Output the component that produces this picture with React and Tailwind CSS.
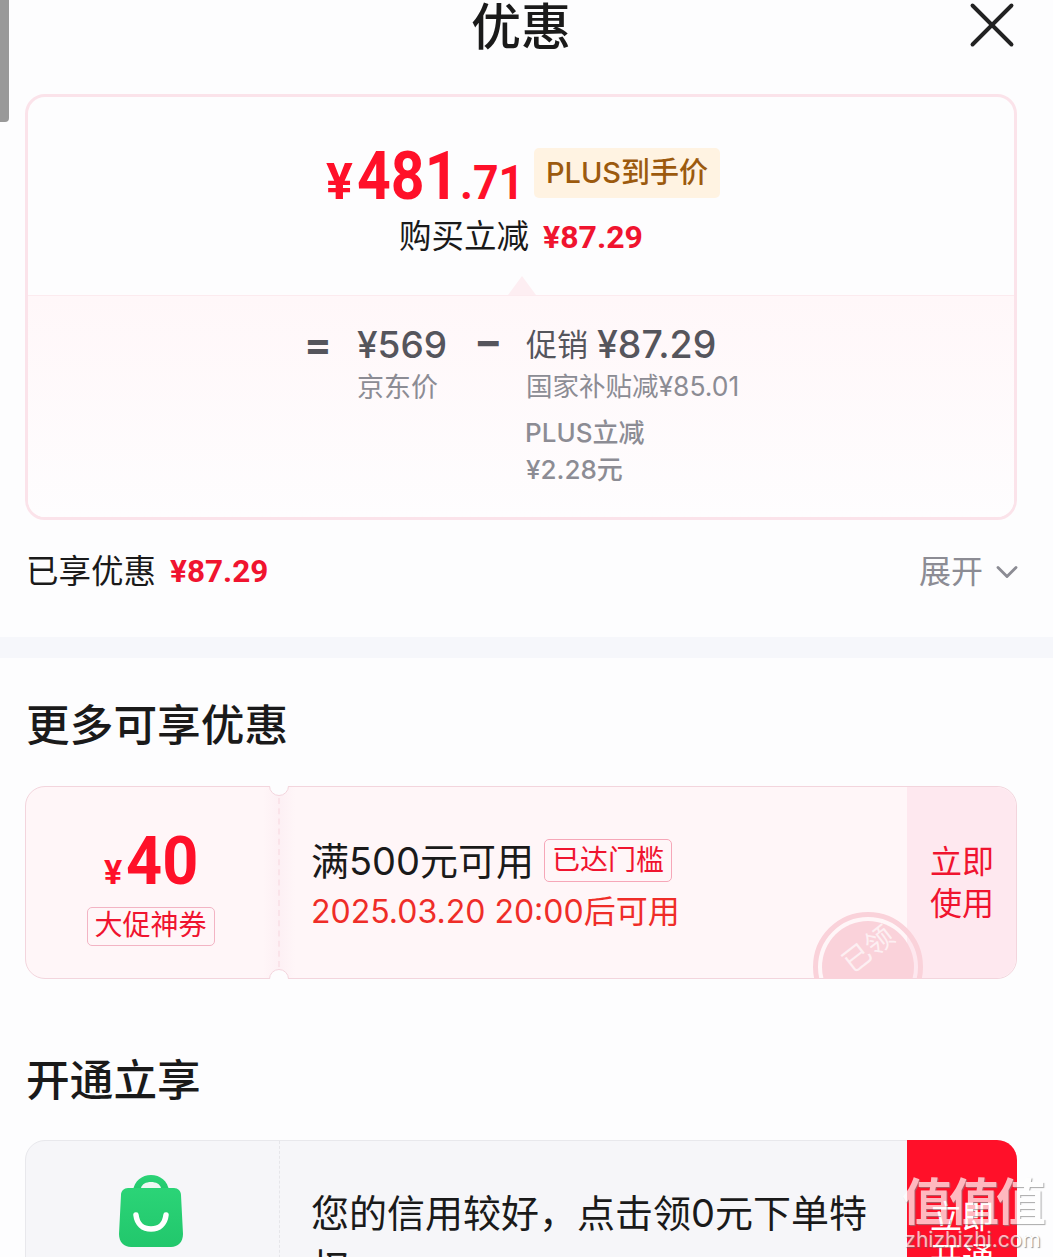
import { X, ChevronDown } from "lucide-react";

const sans = "font-['Inter','Noto_Sans_CJK_SC',sans-serif]";
const num = "font-['Roboto',sans-serif]";

const BagLogo = () => (
  <svg width="64" height="72" viewBox="0 0 64 72">
    <defs>
      <linearGradient id="bag" x1="0" y1="0" x2="0" y2="1">
        <stop offset="0" stopColor="#2bd477" />
        <stop offset="1" stopColor="#22c76c" />
      </linearGradient>
    </defs>
    <path d="M14 16C15 6 23 0 32 0s17 6 18 16z" fill="url(#bag)" />
    <path d="M22 13c1-4 5-6 10-6s9 2 10 6z" fill="#eef7f2" />
    <path d="M9 13h46c4 0 7 3 7 7l2 39c0 8-5 13-12 13H12C5 72 0 67 0 59l2-39c0-4 3-7 7-7z" fill="url(#bag)" />
    <path d="M17 40c1 9 7 14 15 14s14-5 15-14" fill="none" stroke="#fff" strokeWidth="5.5" strokeLinecap="round" />
  </svg>
);

const TicketClip = ({ children }) => (
  <div className="absolute -inset-px overflow-hidden rounded-[20px] pointer-events-none">{children}</div>
);

export default function App() {
  return (
    <div className={`relative w-[1053px] h-[1257px] overflow-hidden bg-[#fdfdfe] ${sans}`}>
      <div className="absolute left-0 top-0 w-[9px] h-[122px] rounded-br-[4px] bg-[#999999] z-10" />

      <div className="w-[1042px]">
        {/* header */}
        <div className="relative h-[94px] flex justify-center">
          <h1 className="mt-[-3px] text-[50px] leading-[60px] font-medium text-[#1a1a1a]">优惠</h1>
          <X className="absolute left-[953px] top-[-14px] text-[#222]" size={78} strokeWidth={1.2} />
        </div>

        {/* price card */}
        <div className="mx-[25px] h-[426px] rounded-[20px] border-[3px] border-[#fbe3ea] overflow-hidden flex flex-col">
          <div className="relative h-[198px] shrink-0 flex flex-col items-center">
            <div className="mt-[51px] ml-[4px] flex items-start gap-[12px]">
              <div className={`w-[196px] text-[#ff1029] font-bold leading-[56px] flex items-baseline whitespace-nowrap ${num}`}>
                <span className="text-[50px] w-[31px]">¥</span>
                <span className="inline-block w-[103px]">
                  <span className="inline-block text-[67px] origin-left scale-x-[0.88]">481</span>
                </span>
                <span className="inline-block w-[62px]">
                  <span className="inline-block text-[48px] origin-left scale-x-[0.93]">.71</span>
                </span>
              </div>
              <div className="h-[50px] w-[186px] rounded-[5px] bg-[#fff3e2] text-[#9c5a0e] text-[29px] leading-[50px] font-medium text-center whitespace-nowrap">
                PLUS到手价
              </div>
            </div>
            <div className="-mt-[7px] flex items-center gap-[14px]">
              <span className="text-[32.5px] leading-[44px] text-[#1a1a1a]">购买立减</span>
              <span className={`text-[32px] leading-[44px] font-bold text-[#f0142f] ${num}`}>¥87.29</span>
            </div>
            <div className="absolute left-[480px] bottom-0 w-0 h-0 border-x-[14px] border-x-transparent border-b-[19px] border-b-[#fdeef2]" />
          </div>
          <div className="flex-1 border-t border-[#fcebef] bg-gradient-to-b from-[#fff7f9] to-[#fefdfe] pl-[276px] pt-[26px] flex">
            <div className="w-[53px] text-[41px] leading-[44px] font-bold text-[#55555c]">=</div>
            <div className="w-[118px]">
              <div className="text-[37px] leading-[46px] font-medium text-[#55555c]">¥569</div>
              <div className="mt-[2px] text-[27px] leading-[36px] text-[#8c8c94]">京东价</div>
            </div>
            <div className="w-[51px] -ml-px text-[42px] leading-[38px] font-bold text-[#55555c]">−</div>
            <div className="ml-px">
              <div className="flex items-center gap-[9px] text-[#55555c] leading-[46px]">
                <span className="text-[31px]">促销</span>
                <span className="text-[37.5px] font-medium">¥87.29</span>
              </div>
              <div className="text-[26.5px] leading-[36px] text-[#8c8c94]">国家补贴减¥85.01</div>
              <div className="mt-[11px] text-[26px] leading-[36px] text-[#8c8c94] font-medium -ml-px">PLUS立减</div>
              <div className="text-[26px] leading-[37px] text-[#8c8c94] font-medium">¥2.28元</div>
            </div>
          </div>
        </div>

        {/* saved row */}
        <div className="ml-[26px] mr-[25px] h-[117px] pb-[13px] flex items-center justify-between">
          <div className="flex items-center gap-[14px]">
            <span className="text-[32.5px] text-[#1a1a1a]">已享优惠</span>
            <span className={`text-[31.5px] font-bold text-[#f0142f] ${num}`}>¥87.29</span>
          </div>
          <div className="flex items-center gap-[6px] text-[#8c8c94] -mr-[8px]">
            <span className="text-[32px]">展开</span>
            <ChevronDown size={36} strokeWidth={1.9} />
          </div>
        </div>
      </div>

      <div className="h-[21px] bg-[#f6f7fb]" />

      <div className="w-[1042px]">
        {/* more offers */}
        <h2 className="mx-[26px] mt-[37px] text-[43.7px] leading-[62px] font-medium text-[#1a1a1a]">更多可享优惠</h2>
        <div className="relative mx-[25px] mt-[29px] h-[193px] rounded-[20px] border border-[#f3d5dd] bg-[#fff6f8] flex">
          <div className="w-[237px] shrink-0 flex flex-col items-center pt-[43px] pl-[12px]">
            <div className={`flex items-baseline text-[#ff1029] font-bold leading-[62px] whitespace-nowrap ${num}`}>
              <span className="text-[34px] w-[22px]">¥</span>
              <span className="inline-block w-[71px]">
                <span className="inline-block text-[67px] origin-left scale-x-[0.94]">40</span>
              </span>
            </div>
            <div className="-mt-[3px] h-[39px] w-[128px] rounded-[5px] border border-[#f3b4c4] text-center text-[#f0142f] text-[28px] leading-[35px]">大促神券</div>
          </div>
          <div className="w-[16px] bg-gradient-to-r from-[#fff6f8] to-[#fdf0f4]" />
          <div className="w-[16px] bg-gradient-to-r from-[#fdf0f4] to-[#fff6f8]" />
          <div className="flex-1 pl-[16px] pt-[47px]">
            <div className="flex items-center gap-[10px]">
              <span className="text-[38px] leading-[54px] text-[#1a1a1a] whitespace-nowrap">满500元可用</span>
              <span className="h-[43px] px-[7px] -translate-y-px rounded-[5px] border border-[#f6a7b8] text-[#f0142f] text-[28px] leading-[40px] whitespace-nowrap">已达门槛</span>
            </div>
            <div className="mt-[1px] text-[32px] leading-[46px] text-[#ef2d28] whitespace-nowrap">2025.03.20 20:00后可用</div>
          </div>
          <div className="relative w-[109px] shrink-0 rounded-r-[20px] bg-[#fee8ef] pl-[23px] pt-[54px] text-[#f0142f] text-[32px] leading-[42px]">
            立即<br />使用
          </div>
          <TicketClip>
            <div className="absolute left-[253px] top-[12px] bottom-[12px] border-l-2 border-dashed border-[#fae3e9]" />
            <div className="absolute left-[244px] -top-[10px] w-[20px] h-[20px] rounded-full bg-[#fdfdfe] border border-[#f3d5dd]" />
            <div className="absolute left-[244px] -bottom-[10px] w-[20px] h-[20px] rounded-full bg-[#fdfdfe] border border-[#f3d5dd]" />
            <div className="absolute left-[788px] top-[126px] w-[110px] h-[110px] rounded-full border-[5px] border-[#fad2da] p-[4px]">
              <div className="w-full h-full rounded-full bg-[#fad2da] flex justify-center pt-[10px]">
                <span className="text-[28px] leading-[36px] text-[#fdeff2] -rotate-[38deg] h-[36px]">已领</span>
              </div>
            </div>
          </TicketClip>
        </div>

        {/* open to enjoy */}
        <h2 className="mx-[26px] mt-[71px] text-[43.7px] leading-[62px] font-medium text-[#1a1a1a]">开通立享</h2>
        <div className="relative mx-[25px] mt-[28px] h-[193px] rounded-[20px] border border-[#e8e8ec] bg-[#f6f6f9] flex">
          <div className="w-[253px] shrink-0 pl-[93px] pt-[34px]">
            <BagLogo />
          </div>
          <div className="w-[32px] border-l border-dashed border-[#e6e6ea]" />
          <div className="flex-1 pt-[45px] pr-[28px] text-[38px] leading-[54px] text-[#1a1a1a]">
            您的信用较好，点击领0元下单特权
          </div>
          <div className="w-[110px] shrink-0 -my-px -mr-px rounded-tr-[20px] bg-[#ff1029] pl-[23px] pt-[56px] text-white text-[32px] leading-[42px]">
            立即<br />开通
          </div>
        </div>
      </div>

      {/* watermark */}
      <div className="absolute left-[900px] bottom-[5px] w-[145px] text-center text-white opacity-70">
        <div className="text-[50px] leading-[52px] font-bold whitespace-nowrap tracking-[-3px] [text-shadow:1px_1px_1px_#888]">值值值</div>
        <div className="text-[21px] leading-[24px] whitespace-nowrap [text-shadow:1px_1px_1px_#666]">zhizhizhi.com</div>
      </div>
    </div>
  );
}
